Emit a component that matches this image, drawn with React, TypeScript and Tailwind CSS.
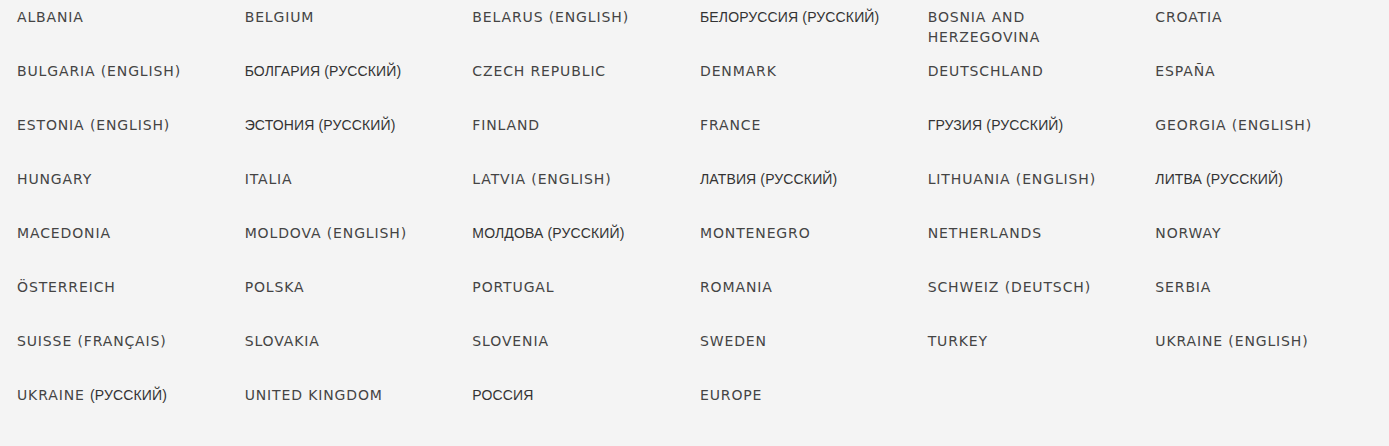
import React from 'react';

// each entry: list of [text, isCyrillic] parts
type Part = [string, boolean];

const countries: Part[][] = [
  [['Albania', false]],
  [['Belgium', false]],
  [['Belarus (English)', false]],
  [['Белоруссия (Русский)', true]],
  [['Bosnia and Herzegovina', false]],
  [['Croatia', false]],
  [['Bulgaria (English)', false]],
  [['Болгария (Русский)', true]],
  [['Czech Republic', false]],
  [['Denmark', false]],
  [['Deutschland', false]],
  [['España', false]],
  [['Estonia (English)', false]],
  [['Эстония (Русский)', true]],
  [['Finland', false]],
  [['France', false]],
  [['Грузия (Русский)', true]],
  [['Georgia (English)', false]],
  [['Hungary', false]],
  [['Italia', false]],
  [['Latvia (English)', false]],
  [['Латвия (Русский)', true]],
  [['Lithuania (English)', false]],
  [['Литва (Русский)', true]],
  [['Macedonia', false]],
  [['Moldova (English)', false]],
  [['Молдова (Русский)', true]],
  [['Montenegro', false]],
  [['Netherlands', false]],
  [['Norway', false]],
  [['Österreich', false]],
  [['Polska', false]],
  [['Portugal', false]],
  [['Romania', false]],
  [['Schweiz (Deutsch)', false]],
  [['Serbia', false]],
  [['Suisse (Français)', false]],
  [['Slovakia', false]],
  [['Slovenia', false]],
  [['Sweden', false]],
  [['Turkey', false]],
  [['Ukraine (English)', false]],
  [['Ukraine ', false], ['(Русский)', true]],
  [['United Kingdom', false]],
  [['Россия', true]],
  [['Europe', false]],
];

const latin = "font-['DejaVu_Sans',sans-serif] tracking-[0.062em] text-[#444]";
const cyr = "font-['Liberation_Sans',sans-serif] tracking-[0.01em] text-[#333]";

const App: React.FC = () => {
  return (
    <div className="min-h-screen bg-[#f4f4f4] pl-[17px] pr-[6px] pt-[7px]">
      <ul className="grid grid-cols-6 auto-rows-[54px]">
        {countries.map((parts) => (
          <li key={parts.map((p) => p[0]).join('')} className="pr-[30px]">
            <a href="#" className="block uppercase text-[14px] leading-[20px] font-['DejaVu_Sans',sans-serif]">
              {parts.map(([t, isCyr]) => (
                <span key={t} className={isCyr ? cyr : latin}>
                  {t}
                </span>
              ))}
            </a>
          </li>
        ))}
      </ul>
    </div>
  );
};

export default App;
